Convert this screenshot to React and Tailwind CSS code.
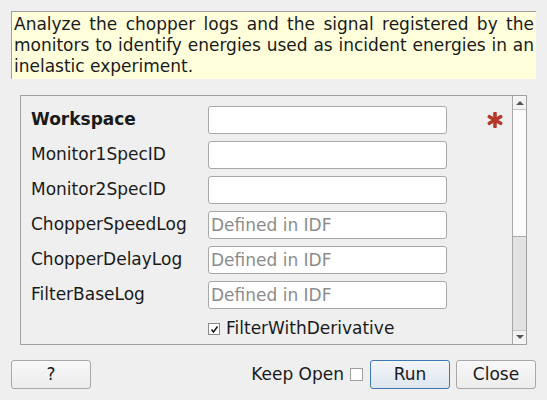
import React from 'react';

const font = { fontFamily: '"DejaVu Sans", sans-serif' };

function Star() {
    return (
        <svg width="16" height="16" viewBox="-8 -8 16 16" className="ml-[40px]">
            {[0, 60, 120].map((a) => (
                <line key={a} x1="0" y1="-6.5" x2="0" y2="6.5" stroke="#b3392b" strokeWidth="3.6" strokeLinecap="round" transform={`rotate(${a})`} />
            ))}
        </svg>
    );
}

function Field({ label, bold, placeholder, required }) {
    return (
        <div className="flex items-center h-[35px]">
            <div className={`w-[187px] shrink-0 pl-[10px] text-[17px] text-[#1a1a1a] ${bold ? 'font-bold' : ''}`}>{label}</div>
            <input
                className="w-[239px] h-[28px] bg-white border border-[#a8a8a8] rounded-[3px] px-[2px] text-[17px] text-[#1a1a1a] placeholder:text-[#8c8c8c] outline-none"
                placeholder={placeholder}
                style={font}
            />
            {required && <Star />}
        </div>
    );
}

export default function App() {
    const fields = [
        { label: 'Workspace', bold: true, required: true },
        { label: 'Monitor1SpecID' },
        { label: 'Monitor2SpecID' },
        { label: 'ChopperSpeedLog', placeholder: 'Defined in IDF' },
        { label: 'ChopperDelayLog', placeholder: 'Defined in IDF' },
        { label: 'FilterBaseLog', placeholder: 'Defined in IDF' },
    ];

    return (
        <div className="w-[547px] h-[400px] bg-[#efefef] overflow-hidden" style={font}>
            <div className="pt-[11px] px-[11px]">
                <div className="h-[68px] bg-[#ffffdc] border-t border-l border-[#a0a0a0] pl-[2px] pr-[2px] pt-[2px] text-[17px] leading-[21px] text-[#1a1a1a] text-justify">
                    Analyze the chopper logs and the signal registered by the monitors to identify energies used as incident energies in an inelastic experiment.
                </div>
            </div>

            <div className="mt-[16px] ml-[20px] w-[507px] h-[250px] border border-[#a0a0a0] flex">
                <div className="flex-1 pt-[6px]">
                    {fields.map((f) => (
                        <Field key={f.label} {...f} />
                    ))}
                    <div className="flex items-center h-[32px] pl-[187px] pt-[2px]">
                        <div className="w-[12px] h-[12px] bg-white border border-[#8a8a8a] flex items-center justify-center">
                            <svg width="9" height="9" viewBox="0 0 9 9">
                                <path d="M1.5 4.5 L3.5 7 L7.5 1.5" fill="none" stroke="#111" strokeWidth="1.4" />
                            </svg>
                        </div>
                        <span className="ml-[6px] text-[17px] text-[#1a1a1a]">FilterWithDerivative</span>
                    </div>
                </div>

                <div className="w-[14px] border-l border-[#a8a8a8] flex flex-col bg-[#f4f4f4]">
                    <div className="h-[14px] flex items-center justify-center border-b border-[#c8c8c8]">
                        <svg width="8" height="5" viewBox="0 0 8 5"><path d="M0 5 L4 1 L8 5 Z" fill="#555" /></svg>
                    </div>
                    <div className="h-[127px] bg-[#fbfbfb] border-b border-[#a8a8a8]"></div>
                    <div className="flex-1 bg-[#e2e2e2]"></div>
                    <div className="h-[14px] flex items-center justify-center border-t border-[#c8c8c8] bg-[#f4f4f4]">
                        <svg width="8" height="5" viewBox="0 0 8 5"><path d="M0 0 L8 0 L4 4 Z" fill="#555" /></svg>
                    </div>
                </div>
            </div>

            <div className="flex items-center mt-[15px] px-[11px]">
                <button className="w-[80px] h-[29px] border border-[#a8a8a8] rounded-[3px] bg-gradient-to-b from-[#f8f8f8] to-[#ececec] text-[17px] text-[#1a1a1a]">?</button>
                <div className="flex-1"></div>
                <span className="text-[17px] text-[#1a1a1a]">Keep Open</span>
                <div className="ml-[6px] w-[13px] h-[13px] bg-white border border-[#a0a0a0]"></div>
                <button className="ml-[7px] w-[80px] h-[29px] border border-[#3c78b4] rounded-[3px] bg-gradient-to-b from-[#f3f6f9] to-[#dde5ee] text-[17px] text-[#1a1a1a]">Run</button>
                <button className="ml-[6px] w-[80px] h-[29px] border border-[#a8a8a8] rounded-[3px] bg-gradient-to-b from-[#f8f8f8] to-[#ececec] text-[17px] text-[#1a1a1a]">Close</button>
            </div>
        </div>
    );
}
